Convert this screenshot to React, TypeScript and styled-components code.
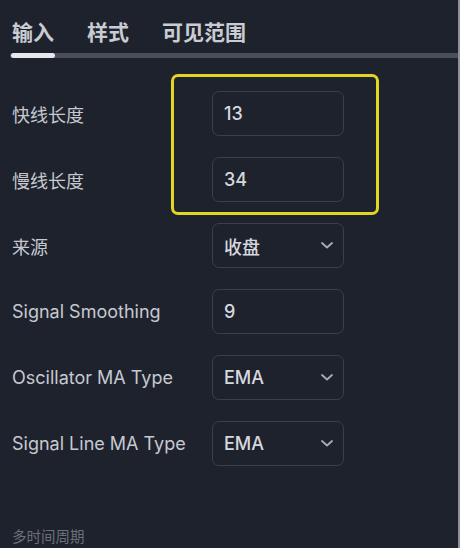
import styled, {createGlobalStyle} from "styled-components";

const GlobalStyle = createGlobalStyle`
	html, body {
		margin: 0;
		padding: 0;
		background: #1e222d;
	}
	* {
		box-sizing: border-box;
	}
`;

type Row = {
	label: string;
	value: string;
	select?: boolean;
};

const rows: Row[] = [
	{label: "快线长度", value: "13"},
	{label: "慢线长度", value: "34"},
	{label: "来源", value: "收盘", select: true},
	{label: "Signal Smoothing", value: "9"},
	{label: "Oscillator MA Type", value: "EMA", select: true},
	{label: "Signal Line MA Type", value: "EMA", select: true}
];

const tabs = ["输入", "样式", "可见范围"];

function Chevron() {
	return (
		<svg width="12" height="7" viewBox="0 0 12 7" fill="none">
			<path d="M1 1l5 4.5L11 1" stroke="#a9acb4" strokeWidth="1.8" strokeLinecap="round" strokeLinejoin="round"/>
		</svg>
	);
}

export default function App() {
	return (
		<Page>
			<GlobalStyle/>
			<TabBar>
				{tabs.map((t) => <Tab key={t}>{t}</Tab>)}
			</TabBar>
			<TabTrack>
				<ActiveBar/>
			</TabTrack>

			<Form>
				<Highlight/>
				{rows.map((r) => (
					<FieldRow key={r.label}>
						<Label>{r.label}</Label>
						<Field>
							<span>{r.value}</span>
							{r.select && <Chevron/>}
						</Field>
					</FieldRow>
				))}
			</Form>

			<SectionTitle>多时间周期</SectionTitle>
		</Page>
	);
}

const Page = styled.div`
	position: relative;
	width: 460px;
	height: 548px;
	overflow: hidden;
	background: #1e222d;
	border-right: 2px solid #8e9199;
	font-family: Inter, "Noto Sans CJK SC", sans-serif;
	color: #d1d4dc;
`;

const TabBar = styled.div`
	display: flex;
	gap: 33px;
	padding: 20px 0 0 12px;
	height: 53px;
`;

const Tab = styled.div`
	font-size: 21px;
	font-weight: 600;
	line-height: 26px;
	color: #c9ccd3;
`;

const TabTrack = styled.div`
	margin-left: 10px;
	height: 5px;
	background: #4a4e59;
	border-radius: 3px 0 0 3px;
`;

const ActiveBar = styled.div`
	margin-left: 1px;
	width: 44px;
	height: 5px;
	border-radius: 3px;
	background: #e6e8ec;
`;

const Form = styled.div`
	position: relative;
	display: flex;
	flex-direction: column;
	gap: 21px;
	padding-top: 33px;
`;

const Highlight = styled.div`
	position: absolute;
	left: 171px;
	top: 16px;
	width: 208px;
	height: 141px;
	border: 3px solid #e3d526;
	border-radius: 7px;
	pointer-events: none;
`;

const FieldRow = styled.div`
	display: grid;
	grid-template-columns: 212px 132px;
	align-items: center;
	height: 45px;
`;

const Label = styled.div`
	padding-left: 12px;
	font-size: 18px;
	color: #c6c9d0;
`;

const Field = styled.div`
	display: flex;
	align-items: center;
	justify-content: space-between;
	height: 45px;
	padding: 0 10px 0 11px;
	border: 1px solid #3b3f4b;
	border-radius: 7px;
	font-size: 18px;
	font-weight: 500;
	color: #d6d8de;
`;

const SectionTitle = styled.div`
	position: absolute;
	left: 12px;
	bottom: 2px;
	font-size: 14.5px;
	color: #6b6f7a;
`;
